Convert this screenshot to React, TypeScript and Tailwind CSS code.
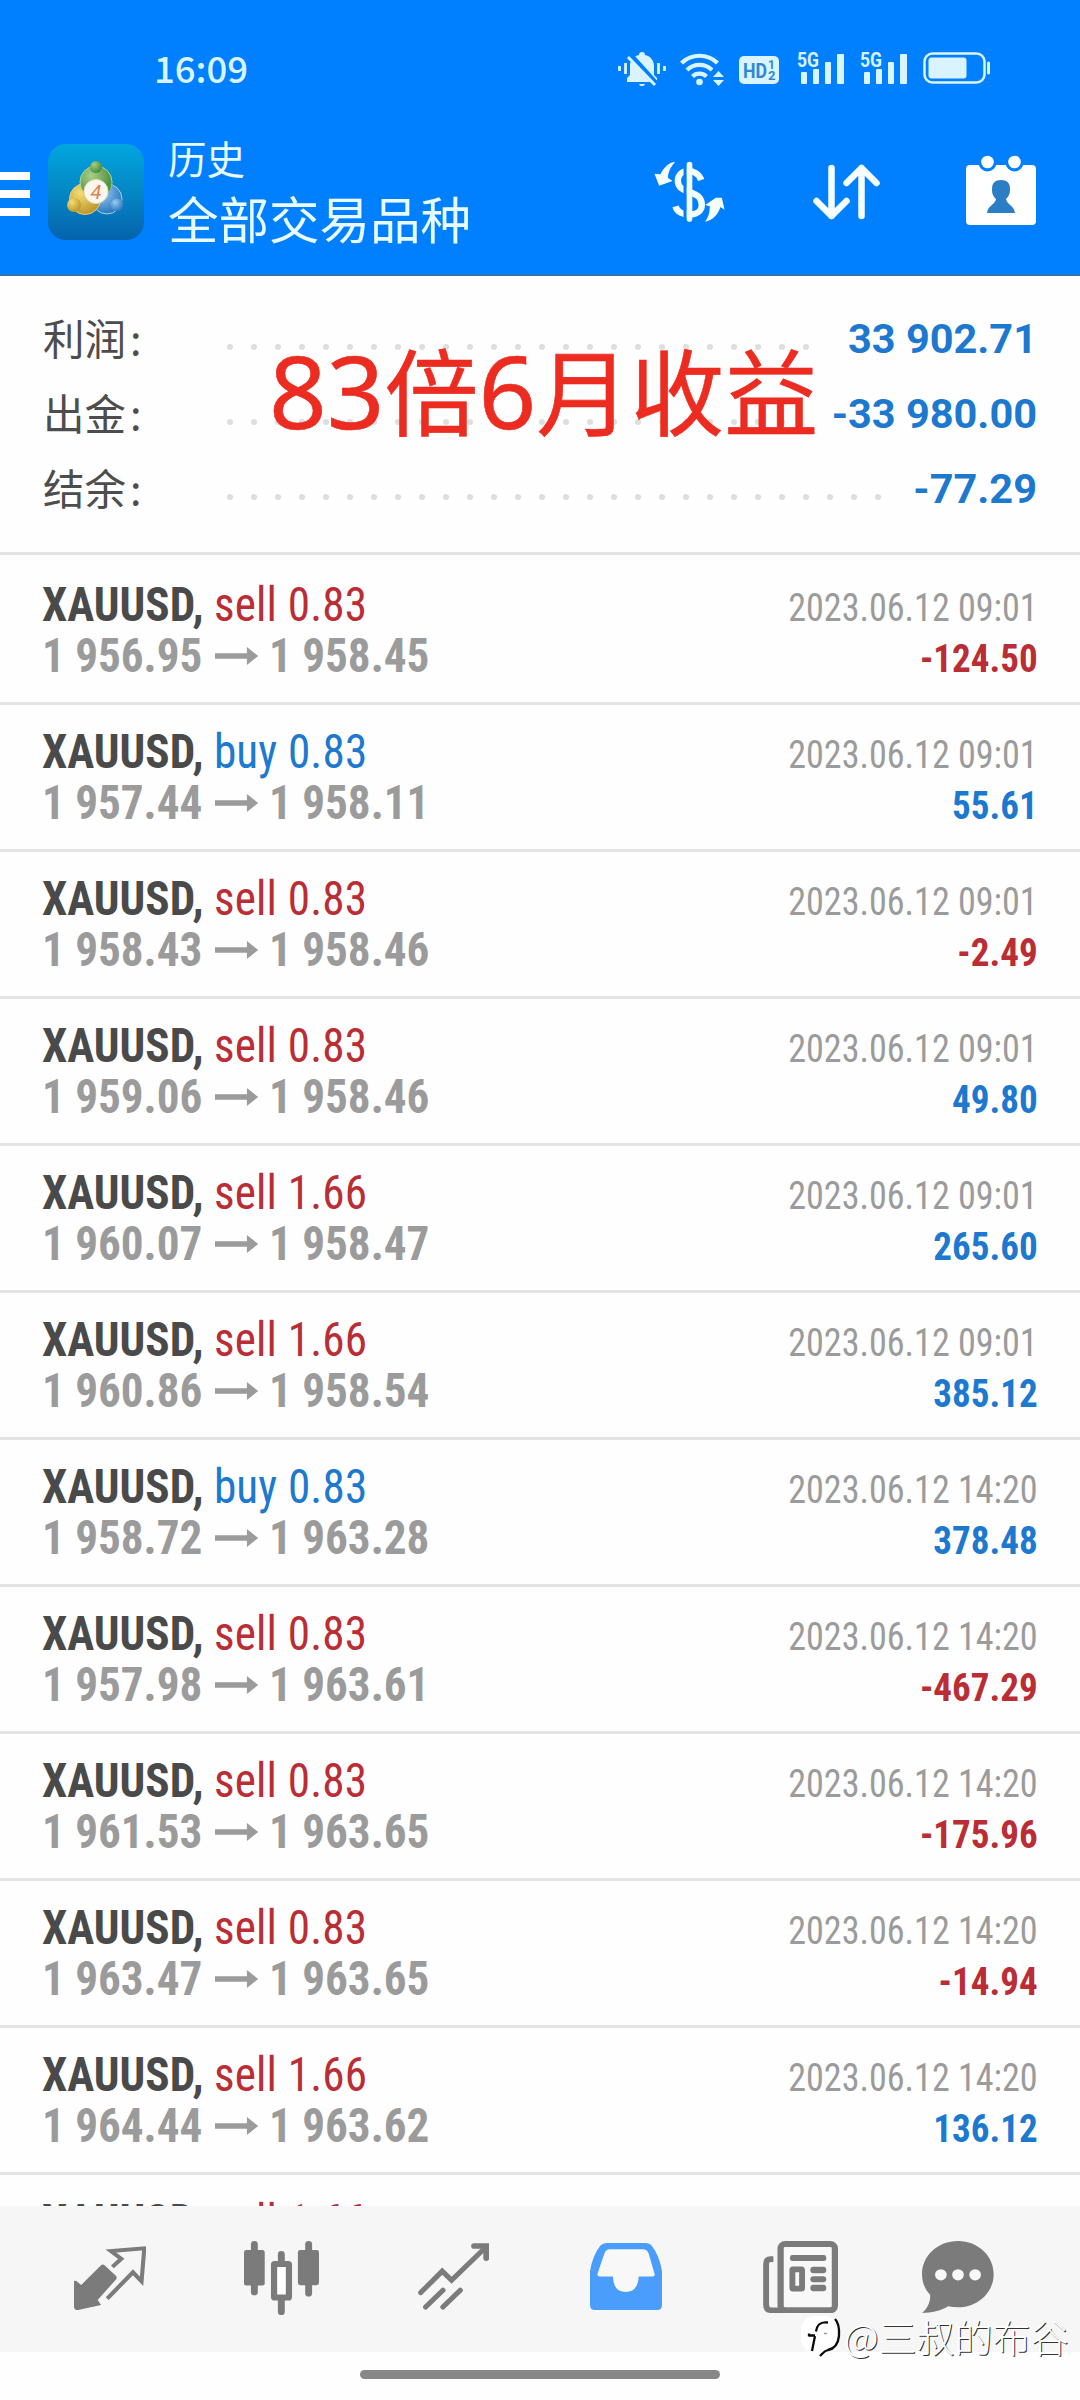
type Deal = {
  side: 'sell' | 'buy';
  lots: string;
  open: string;
  close: string;
  time: string;
  profit: string;
};

const deals: Deal[] = [
  { side: 'sell', lots: '0.83', open: '1 956.95', close: '1 958.45', time: '2023.06.12 09:01', profit: '-124.50' },
  { side: 'buy', lots: '0.83', open: '1 957.44', close: '1 958.11', time: '2023.06.12 09:01', profit: '55.61' },
  { side: 'sell', lots: '0.83', open: '1 958.43', close: '1 958.46', time: '2023.06.12 09:01', profit: '-2.49' },
  { side: 'sell', lots: '0.83', open: '1 959.06', close: '1 958.46', time: '2023.06.12 09:01', profit: '49.80' },
  { side: 'sell', lots: '1.66', open: '1 960.07', close: '1 958.47', time: '2023.06.12 09:01', profit: '265.60' },
  { side: 'sell', lots: '1.66', open: '1 960.86', close: '1 958.54', time: '2023.06.12 09:01', profit: '385.12' },
  { side: 'buy', lots: '0.83', open: '1 958.72', close: '1 963.28', time: '2023.06.12 14:20', profit: '378.48' },
  { side: 'sell', lots: '0.83', open: '1 957.98', close: '1 963.61', time: '2023.06.12 14:20', profit: '-467.29' },
  { side: 'sell', lots: '0.83', open: '1 961.53', close: '1 963.65', time: '2023.06.12 14:20', profit: '-175.96' },
  { side: 'sell', lots: '0.83', open: '1 963.47', close: '1 963.65', time: '2023.06.12 14:20', profit: '-14.94' },
  { side: 'sell', lots: '1.66', open: '1 964.44', close: '1 963.62', time: '2023.06.12 14:20', profit: '136.12' },
];

const summary = [
  { label: '利润', value: '33 902.71', dots: 25 },
  { label: '出金', value: '-33 980.00', dots: 24 },
  { label: '结余', value: '-77.29', dots: 28 },
];

function Signal() {
  return (
    <svg className="overflow-visible" width="47" height="32" viewBox="0 0 47 32" fill="currentColor">
      <text x="0" y="15" fontSize="20" fontWeight="700" fontFamily="Roboto, sans-serif" textLength="22" lengthAdjust="spacingAndGlyphs">5G</text>
      <rect x="4" y="20" width="6" height="12" rx="1" />
      <rect x="16" y="17" width="6" height="15" rx="1" />
      <rect x="28" y="10" width="6" height="22" rx="1" />
      <rect x="40" y="2" width="7" height="30" rx="1" />
    </svg>
  );
}

function StatusBar() {
  return (
    <div className="flex h-[137px] items-start pl-[154px] text-[#d9f4ff]">
      <div className="mt-[40px] w-[464px] font-['Noto_Sans_CJK_SC',sans-serif] text-[36.5px] leading-[55px] font-medium">16:09</div>
      <div className="mt-[52px] flex items-start">
        {/* Muted bell */}
        <svg width="48" height="34" viewBox="0 0 48 34" fill="currentColor">
          <path d="M9 30v-4l3-3v-9c0-6 4-10 9-11a3 3 0 0 1 6 0c5 1 9 5 9 11v9l3 3v4z" />
          <path d="M21 32h6c-1 3-5 3-6 0z" />
          <path d="M12 3l27 30" stroke="#0080ff" strokeWidth="6" />
          <path d="M10 5l27 28" stroke="currentColor" strokeWidth="3" />
          <path d="M1.5 14v5M7.500 11v11M40.500 11v11M46.500 14v5" stroke="currentColor" strokeWidth="2.800" />
        </svg>
        <svg className="ml-[14px]" width="46" height="34" viewBox="0 0 46 34" fill="none" stroke="currentColor" strokeWidth="4.200">
          <path d="M1.500 11a26 26 0 0 1 36 0" />
          <path d="M7 18a18 18 0 0 1 25 0" />
          <path d="M12.500 24.500a10 10 0 0 1 14 0" />
          <circle cx="19.500" cy="30" r="3.300" fill="currentColor" stroke="none" />
          <path d="M33 25l5.500-6 5.500 6zM33 28l5.500 6 5.500-6z" fill="currentColor" stroke="none" />
        </svg>
        <svg className="mt-1 ml-[13px]" width="40" height="28" viewBox="0 0 40 28">
          <rect width="40" height="28" rx="5" fill="currentColor" />
          <g fill="#2f87d6" fontFamily="Roboto, sans-serif" fontWeight="700">
            <text x="4" y="21.500" fontSize="21" textLength="24" lengthAdjust="spacingAndGlyphs">HD</text>
            <text x="29" y="13" fontSize="12">1</text>
            <text x="29" y="24" fontSize="13">2</text>
          </g>
        </svg>
        <div className="ml-[18px]"><Signal /></div>
        <div className="ml-4"><Signal /></div>
        <svg className="ml-4" width="68" height="32" viewBox="0 0 68 32" fill="none">
          <rect x="1.500" y="1.500" width="60" height="29" rx="8" stroke="currentColor" strokeWidth="2.500" />
          <rect x="5.500" y="5.500" width="38" height="21" rx="3" fill="currentColor" />
          <path d="M65.500 11v10" stroke="currentColor" strokeWidth="3" strokeLinecap="round" />
        </svg>
      </div>
    </div>
  );
}

function Logo() {
  return (
    <svg className="ml-[18px]" width="96" height="96" viewBox="0 0 96 96">
      <defs>
        <linearGradient id="tile" x1="0" y1="0" x2="0" y2="1">
          <stop offset="0" stopColor="#02a6e0" />
          <stop offset="0.5" stopColor="#0487c4" />
          <stop offset="1" stopColor="#0563ae" />
        </linearGradient>
        <radialGradient id="green" cx=".35" cy=".3" r=".8"><stop offset="0" stopColor="#a9cf83" /><stop offset="1" stopColor="#3a8035" /></radialGradient>
        <radialGradient id="gold" cx=".35" cy=".3" r=".8"><stop offset="0" stopColor="#f2de72" /><stop offset="1" stopColor="#b98d24" /></radialGradient>
        <radialGradient id="blue" cx=".35" cy=".3" r=".8"><stop offset="0" stopColor="#95ccf0" /><stop offset="1" stopColor="#1c6cb8" /></radialGradient>
      </defs>
      <rect width="96" height="96" rx="18" fill="url(#tile)" />
      <circle cx="59" cy="55" r="15" fill="url(#blue)" stroke="#a9d4e4" />
      <circle cx="37" cy="55" r="15.500" fill="url(#gold)" stroke="#ddd07c" />
      <circle cx="48" cy="38" r="16" fill="url(#green)" stroke="#b5d498" />
      <path d="M48 48L63 36A16 16 0 0 1 60 49z" fill="#4c9840" />
      <circle cx="48" cy="23" r="6" fill="url(#green)" />
      <circle cx="26" cy="61" r="7" fill="url(#gold)" />
      <circle cx="69" cy="61" r="6.500" fill="url(#blue)" />
      <circle cx="48" cy="47.500" r="12" fill="#fbf7ee" stroke="#e6d9c0" />
      <text x="48" y="54.500" textAnchor="middle" fontSize="20" fontStyle="italic" fontFamily="Roboto, sans-serif" fill="#e3814a">4</text>
    </svg>
  );
}

function Header() {
  return (
    <header className="h-[276px] border-b-2 border-[#2f74b8] bg-[#0080ff]">
      <StatusBar />
      <div className="flex items-start">
        <div className="mt-[35px] flex w-[30px] flex-col gap-[10px]">
          <div className="h-2 bg-white" />
          <div className="h-2 bg-white" />
          <div className="h-2 bg-white" />
        </div>
        <div className="mt-[7px]"><Logo /></div>
        <div className="-mt-[3px] ml-6 w-[485px] font-['Noto_Sans_CJK_SC',sans-serif] text-[#e8fbff]">
          <div className="text-[38.5px] leading-[46px]">历史</div>
          <div className="text-[50.5px] leading-[74px]">全部交易品种</div>
        </div>
        {/* Currency */}
        <svg className="mt-[24px] text-[#f4feff]" width="73" height="62" viewBox="0 0 210 186" fill="currentColor">
          <path d="M140 57C128 20 70 20 70 60c0 20 16 28 36 34s36 14 36 38c0 38-70 38-79 4" fill="none" stroke="currentColor" strokeWidth="19" />
          <path d="M92 12v160" stroke="#0080ff" strokeWidth="10" />
          <path d="M105 11v163" stroke="currentColor" strokeWidth="17" strokeLinecap="round" />
          <path d="M62 2c-18 2-36 18-44 38L0 38l14 36 40-14-14-10c2-18 8-32 22-48z" />
          <path d="M152 182c22-4 38-20 46-44l12 8-8-36h-18l-32 22 14 4c0 18-4 32-14 46z" />
        </svg>
        {/* Sort */}
        <svg className="mt-[27px] ml-[87px] text-[#f4feff]" width="67" height="56" viewBox="0 0 67 56" fill="none" stroke="currentColor" strokeWidth="6.500" strokeLinecap="round" strokeLinejoin="round">
          <path d="M18.500 4v48M3.500 37l15 15 15-15" />
          <path d="M48.500 52V4M33.500 19l15-15 15 15" />
        </svg>
        {/* Calendar with contact */}
        <svg className="mt-[18px] ml-[86px]" width="70" height="70" viewBox="0 0 70 70">
          <rect x="0" y="10" width="70" height="60" rx="4" fill="#fff" />
          <circle cx="21.500" cy="7.500" r="9" fill="#0080ff" />
          <circle cx="48.500" cy="7.500" r="9" fill="#0080ff" />
          <circle cx="21.500" cy="7" r="6.300" fill="#fff" />
          <circle cx="48.500" cy="7" r="6.300" fill="#fff" />
          <path d="M35 25c6 0 9 3 9 9 0 5-1 7-4 10 1 6 8 6 9 14H21c1-8 8-8 9-14-3-3-4-5-4-10 0-6 3-9 9-9z" fill="#2b7ec4" />
        </svg>
      </div>
    </header>
  );
}

function Summary() {
  return (
    <section className="relative h-[279px] border-b-[3px] border-[#e4e4e4] pt-[26px]">
      {summary.map((row) => (
        <div key={row.label} className="flex h-[75px] items-center pr-[43px] pl-[43px]">
          <div className="-mt-1 flex w-[184px] gap-[4px] font-['Noto_Sans_CJK_SC',sans-serif] text-[41.5px] text-[#4d4d4d]">
            <span>{row.label}</span>
            <span>:</span>
          </div>
          <div className="mt-[15px] flex gap-[18px]">
            {Array.from({ length: row.dots }, (_, i) => (
              <span key={i} className="size-[6px] rounded-full bg-[#dedede]" />
            ))}
          </div>
          <div className="ml-auto text-[41.5px] font-bold text-[#1c79cf]">{row.value}</div>
        </div>
      ))}
      <div className="absolute top-[40px] left-[269px] font-['Noto_Sans_CJK_SC',sans-serif] text-[94px] leading-[144px] whitespace-nowrap text-[#ec2c20] [-webkit-text-stroke:0.6px_#ec2c20]">
        <span className="font-['Noto_Sans',sans-serif] text-[101px]">83</span>
        倍
        <span className="font-['Noto_Sans',sans-serif] text-[101px]">6</span>
        月收益
      </div>
    </section>
  );
}

function DealRow({ deal }: { deal: Deal }) {
  return (
    <li className="flex h-[147px] justify-between border-b-[3px] border-[#e4e4e4] pr-[42px] pl-[42px] [font-stretch:75%]">
      <div className="origin-left scale-x-[.94] pt-[21px]">
        <div className="text-[48px] leading-[52px] whitespace-pre">
          <span className="font-bold text-[#4a4a4a]">XAUUSD, </span>
          <span className={`tracking-[0.2px] ${deal.side === 'sell' ? 'text-[#bb2d35]' : 'text-[#1c79cf]'}`}>{deal.side} {deal.lots}</span>
        </div>
        <div className="-mt-px flex items-center text-[48px] leading-[52px] font-bold text-[#9b9b9b]">
          <span>{deal.open}</span>
          <svg className="mr-[12px] ml-[13px]" width="46" height="18" viewBox="0 0 46 18" fill="currentColor">
            <path d="M0 6.200h34V0l12 9-12 9v-6.200H0z" />
          </svg>
          <span>{deal.close}</span>
        </div>
      </div>
      <div className="pt-[25px] text-right">
        <div className="origin-right scale-x-[.925] text-[39px] leading-[50px] text-[#9b9b9b]">{deal.time}</div>
        <div className={`origin-right scale-x-[.95] text-[39px] leading-[52px] font-bold ${deal.profit.startsWith('-') ? 'text-[#bb2d35]' : 'text-[#1c79cf]'}`}>{deal.profit}</div>
      </div>
    </li>
  );
}

function TabBar() {
  return (
    <nav className="flex h-[146px] items-start bg-[#f6f6f6] pl-[74px] text-[#7b7b7b]">
      {/* Quotes */}
      <svg className="mt-[40px]" width="72" height="64" viewBox="0 0 210 190" preserveAspectRatio="none" fill="currentColor">
        <path d="M0 104l6-1 15 13L78 58q6-6 12 0l32 30q5 6 0 12L69 160l10 15-67 15q-12 0-12-10z" />
        <path d="M112 62l26-24-30-23 97-8-8 98-25-27-75 78" fill="none" stroke="currentColor" strokeWidth="12" />
      </svg>
      {/* Charts */}
      <svg className="mt-[35px] ml-[98px]" width="75" height="74" viewBox="0 0 217 221" preserveAspectRatio="none" fill="currentColor">
        <rect x="0" y="27" width="60" height="106" rx="7" />
        <rect x="20" y="0" width="20" height="162" rx="10" />
        <rect x="156" y="27" width="61" height="105" rx="7" />
        <rect x="177" y="0" width="20" height="166" rx="10" />
        <rect x="98" y="30" width="20" height="45" rx="10" />
        <rect x="98" y="165" width="20" height="56" rx="10" />
        <rect x="87" y="69" width="43" height="100" rx="2" fill="#fff" stroke="currentColor" strokeWidth="18" />
      </svg>
      {/* Trade */}
      <svg className="mt-[37px] ml-[99px]" width="71" height="67" viewBox="0 0 205 200" preserveAspectRatio="none" fill="none" stroke="currentColor" strokeWidth="15">
        <path d="M8 148L70 84l27 27L194 14" strokeLinecap="round" />
        <path d="M162 9h35v36" strokeWidth="17" strokeLinecap="round" />
        <path d="M22 191l50-50M72 191l50-50" strokeLinecap="round" />
      </svg>
      {/* History, active tab */}
      <svg className="mt-[37px] ml-[101px]" width="72" height="67" viewBox="0 0 210 200" preserveAspectRatio="none">
        <path d="M0 84Q8 36 30 8q8-8 18-8h116q10 0 16 8 22 28 30 76v102q0 14-14 14H14q-14 0-14-14z" fill="#4a9dfb" />
        <path d="M58 19h96q12 0 17 12l17 60q3 9-6 9h-40q-2 46-38 46T67 100H28q-8 0-6-9l20-60q5-12 16-12z" fill="#f8f8f8" />
      </svg>
      {/* News */}
      <svg className="mt-[35px] ml-[101px]" width="75" height="72" viewBox="0 0 217 215" preserveAspectRatio="none">
        <path d="M30 54H22q-13 0-13 14v122q0 17 17 17h164" fill="none" stroke="currentColor" strokeWidth="17" />
        <rect x="51" y="9" width="157" height="198" rx="13" fill="#f8f8f8" stroke="currentColor" strokeWidth="18" />
        <g fill="currentColor">
          <rect x="78" y="42" width="105" height="18" rx="7" />
          <rect x="137" y="77" width="46" height="19" rx="9" />
          <rect x="137" y="105" width="46" height="18" rx="9" />
          <rect x="137" y="131" width="46" height="19" rx="9" />
        </g>
        <rect x="85" y="85" width="28" height="57" rx="2" fill="#f8f8f8" stroke="currentColor" strokeWidth="17" />
      </svg>
      {/* Messages */}
      <svg className="mt-[35px] ml-[84px]" width="72" height="72" viewBox="0 0 210 215" preserveAspectRatio="none">
        <path d="M105 0c58 0 104 44 104 99s-46 99-104 99c-10 0-20-1-29-3-22 14-48 20-76 20 17-15 24-32 24-54C8 144 0 122 0 99 0 44 46 0 105 0z" fill="currentColor" />
        <circle cx="55" cy="101" r="17" fill="#f8f8f8" />
        <circle cx="105" cy="101" r="17" fill="#f8f8f8" />
        <circle cx="155" cy="101" r="17" fill="#f8f8f8" />
      </svg>
    </nav>
  );
}

function Watermark() {
  return (
    <div className="absolute top-[2311px] left-[801px] flex items-center">
      <svg className="mt-[4px]" width="40" height="46" viewBox="0 0 40 46" fill="none">
        <rect x="0" y="1" width="37" height="37" rx="14" fill="#fff" />
        <path d="M27 7.500c-8-1-11 2-12 9M8 20.500h6M8 18.500v3M14 21l-3 15" stroke="#0a0a0a" strokeWidth="2.300" />
        <path d="M34 4c4 4 4.500 9 4 17-1 9-6 13-11 14-4 1-5 3-8 6" stroke="#0a0a0a" strokeWidth="2.300" />
        <path d="M23 18.500h3" stroke="#999" strokeWidth="1.500" />
      </svg>
      <span className="ml-[3px] font-['Noto_Sans_CJK_SC',sans-serif] text-[38px] leading-[50px] font-light whitespace-nowrap text-white [text-shadow:1px_1px_0_#333]">@三叔的布谷</span>
    </div>
  );
}

export default function App() {
  return (
    <div className="relative h-[2400px] w-[1080px] overflow-hidden bg-[#fefefe] font-[Roboto,sans-serif]">
      <Header />
      <Summary />
      <ul className="h-[1651px] overflow-hidden pt-[3px]">
        {deals.map((deal, i) => (
          <DealRow key={i} deal={deal} />
        ))}
        <DealRow deal={{ side: 'sell', lots: '1.66', open: '', close: '', time: '', profit: '' }} />
      </ul>
      <TabBar />
      <div className="mx-auto mt-[18px] h-[9px] w-[360px] rounded-full bg-[#878787]" />
      <Watermark />
    </div>
  );
}
